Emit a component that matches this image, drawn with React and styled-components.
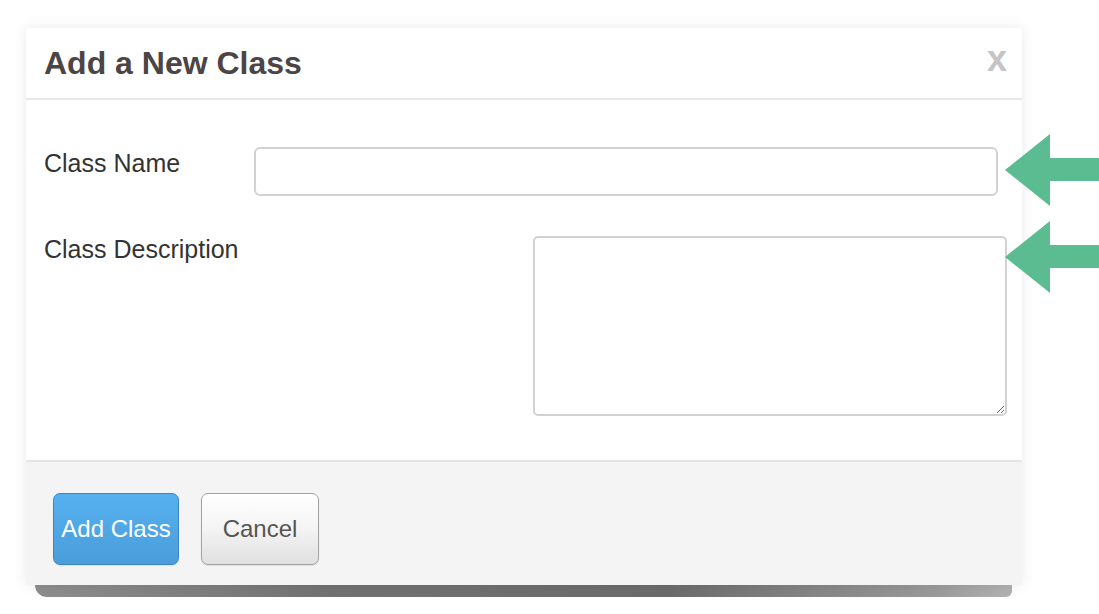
import styled, { createGlobalStyle } from 'styled-components';

const GlobalStyle = createGlobalStyle`
  html {
    background: #ffffff;
  }
  body {
    margin: 0;
    padding: 0;
    font-family: "Liberation Sans", Arial, sans-serif;
  }
`;

const Page = styled.div`
  width: 1099px;
  height: 614px;
  position: relative;
  isolation: isolate;
  overflow: hidden;
  padding: 28px 0 0 26px;
  box-sizing: border-box;
`;

const Modal = styled.div`
  position: relative;
  width: 996px;
  display: flex;
  flex-direction: column;
  background: #ffffff;
  border-radius: 4px 4px 0 0;
  box-shadow: 0 0 14px rgba(0, 0, 0, 0.09);

  /* torn paper shadow under the sheet */
  &::after {
    content: '';
    position: absolute;
    left: 9px;
    right: 10px;
    bottom: -12px;
    height: 16px;
    background: linear-gradient(90deg, #8e8e8e 0%, #727272 30%, #6c6c6c 65%, #9a9a9a 92%, #b2b2b2 100%);
    border-radius: 0 0 6px 12px;
    filter: blur(0.7px);
    z-index: -1;
  }
`;

const Header = styled.div`
  height: 70px;
  display: flex;
  align-items: center;
  justify-content: space-between;
  padding: 0 15px 0 18px;
  border-bottom: 2px solid #e9e9e9;
`;

const Title = styled.h1`
  margin: 0;
  font-size: 32px;
  font-weight: bold;
  color: #4d4444;
`;

const Close = styled.span`
  font-size: 36px;
  font-weight: bold;
  color: #c4c4c4;
  margin-top: -8px;
`;

const Body = styled.div`
  height: 362px;
  padding-top: 47px;
  box-sizing: border-box;
  display: flex;
  flex-direction: column;
  gap: 40px;
  border-bottom: 2px solid #e4e4e4;
`;

const Row = styled.div`
  display: flex;
  align-items: flex-start;
  padding-left: 18px;
  padding-right: ${(p) => p.right}px;
`;

const Label = styled.label`
  flex: 0 0 ${(p) => p.width}px;
  font-size: 25px;
  line-height: 30px;
  color: #333333;
  margin-top: ${(p) => p.offset}px;
`;

const Input = styled.input`
  flex: 1;
  height: 49px;
  box-sizing: border-box;
  border: 2px solid #d2d2d2;
  border-radius: 6px;
  background: #fff;
  outline: none;
`;

const TextArea = styled.textarea`
  flex: 1;
  height: 180px;
  box-sizing: border-box;
  border: 2px solid #d2d2d2;
  border-radius: 5px;
  background: #fff;
  outline: none;
  resize: both;
`;

const Footer = styled.div`
  height: 123px;
  background: #f4f4f4;
  display: flex;
  align-items: flex-start;
  gap: 22px;
  padding: 31px 0 0 27px;
  box-sizing: border-box;
`;

const Button = styled.button`
  width: ${(p) => (p.primary ? 126 : 118)}px;
  height: 72px;
  padding: 0;
  border-radius: 7px;
  font-family: "Liberation Sans", Arial, sans-serif;
  font-size: 24px;
  color: ${(p) => (p.primary ? '#ffffff' : '#555555')};
  border: 1.5px solid ${(p) => (p.primary ? '#3a86c2' : '#a2a2a2')};
  background: ${(p) =>
    p.primary
      ? 'linear-gradient(180deg, #56b1f0 0%, #4a9dda 100%)'
      : 'linear-gradient(180deg, #ffffff 0%, #f4f4f4 50%, #e0e0e0 100%)'};
  box-shadow: 0 1px 1px rgba(0, 0, 0, 0.08);
`;

const Arrow = styled.svg`
  position: absolute;
  left: 1005px;
  top: ${(p) => p.top}px;
`;

function GreenArrow({ top }) {
  return (
    <Arrow top={top} width="94" height="72" viewBox="0 0 94 72">
      <path d="M0 36 L45 0 L45 24 L94 24 L94 47 L45 47 L45 72 Z" fill="#5bbc91" />
    </Arrow>
  );
}

export default function App() {
  return (
    <Page>
      <GlobalStyle />
      <Modal>
        <Header>
          <Title>Add a New Class</Title>
          <Close>x</Close>
        </Header>
        <Body>
          <Row right={24}>
            <Label width={210} offset={1}>Class Name</Label>
            <Input type="text" />
          </Row>
          <Row right={15}>
            <Label width={489} offset={-2}>Class Description</Label>
            <TextArea />
          </Row>
        </Body>
        <Footer>
          <Button primary>Add Class</Button>
          <Button>Cancel</Button>
        </Footer>
      </Modal>
      <GreenArrow top={134} />
      <GreenArrow top={221} />
    </Page>
  );
}
